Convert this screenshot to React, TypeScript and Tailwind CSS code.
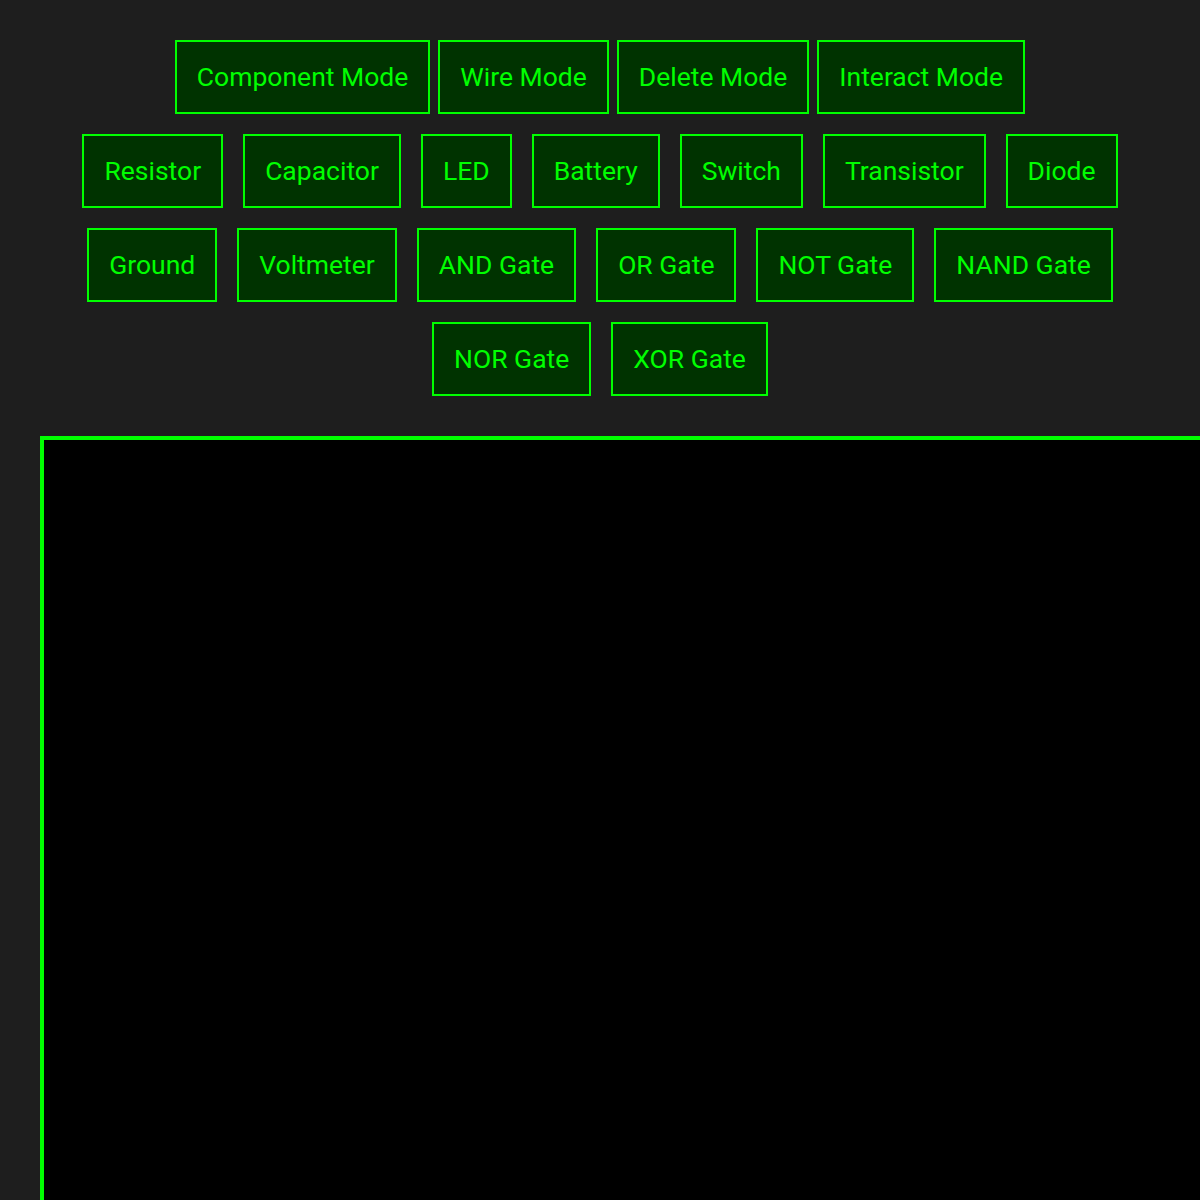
const modes = ["Component Mode", "Wire Mode", "Delete Mode", "Interact Mode"];

const componentRows = [
  ["Resistor", "Capacitor", "LED", "Battery", "Switch", "Transistor", "Diode"],
  ["Ground", "Voltmeter", "AND Gate", "OR Gate", "NOT Gate", "NAND Gate"],
  ["NOR Gate", "XOR Gate"],
];

function ToolButton({ label }: { label: string }) {
  return (
    <button className="border-2 border-[#00ff00] bg-[#003300] px-5 py-5 text-[26.5px] leading-[30px] text-[#00ff00] [font-family:Roboto,'Liberation_Sans',sans-serif]">
      {label}
    </button>
  );
}

export default function App() {
  return (
    <div className="min-h-[1200px] overflow-hidden bg-[#1e1e1e] pt-10 [font-family:Roboto,'Liberation_Sans',sans-serif]">
      <div className="flex flex-col items-center gap-5">
        <div className="flex justify-center gap-2">
          {modes.map((m) => (
            <ToolButton key={m} label={m} />
          ))}
        </div>
        {componentRows.map((row, i) => (
          <div key={i} className="flex justify-center gap-5">
            {row.map((c) => (
              <ToolButton key={c} label={c} />
            ))}
          </div>
        ))}
      </div>
      <div className="ml-10 mt-10 h-[800px] w-[1200px] border-4 border-[#00ff00] bg-black" />
    </div>
  );
}
